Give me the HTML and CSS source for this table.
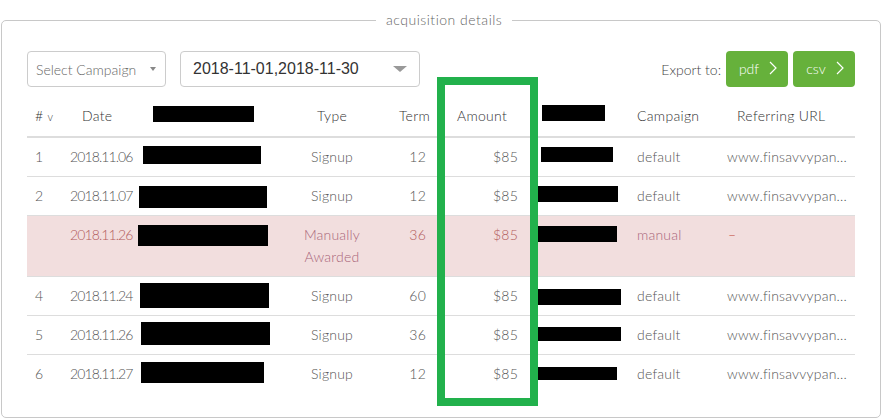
FILE: index.html
```html
<!DOCTYPE html>
<html>
<head>
<meta charset="utf-8">
<link rel="stylesheet" href="styles.css">
</head>
<body>
<fieldset class="panel">
  <legend class="panel-title">acquisition details</legend>
  <div class="toolbar">
    <div class="filters">
      <div class="select select-campaign">
        <span class="select-label">Select Campaign</span>
        <span class="caret-small"></span>
      </div>
      <div class="select select-date">
        <span class="date-label">2018-11-01,2018-11-30</span>
        <span class="caret-big"></span>
      </div>
    </div>
    <div class="export">
      <span class="export-label">Export to:</span>
      <button class="btn">pdf <svg class="chev" width="8" height="14" viewBox="0 0 8 14"><polyline points="1,1 7,7 1,13" fill="none" stroke="#fff" stroke-width="1.2"/></svg></button>
      <button class="btn">csv <svg class="chev" width="8" height="14" viewBox="0 0 8 14"><polyline points="1,1 7,7 1,13" fill="none" stroke="#fff" stroke-width="1.2"/></svg></button>
    </div>
  </div>
  <table class="grid">
    <colgroup>
      <col class="c-num"><col class="c-date"><col class="c-name"><col class="c-type"><col class="c-term"><col class="c-amt"><col class="c-ref"><col class="c-camp"><col class="c-url">
    </colgroup>
    <thead>
      <tr>
        <th class="num"># <span class="sort">v</span></th>
        <th class="date-h">Date</th>
        <th class="cell-r"><span class="redact rh1"></span></th>
        <th class="type">Type</th>
        <th class="term-h">Term</th>
        <th class="amt-h">Amount</th>
        <th class="cell-r"><span class="redact rh2"></span></th>
        <th class="camp">Campaign</th>
        <th class="url-h">Referring URL</th>
      </tr>
    </thead>
    <tbody>
      <tr>
        <td class="num">1</td><td class="date">2018.11.06</td>
        <td class="cell-r"><span class="redact a1"></span></td>
        <td class="type">Signup</td><td class="term">12</td><td class="amt">$85</td>
        <td class="cell-r"><span class="redact b1"></span></td>
        <td class="camp">default</td><td class="url">www.finsavvypan...</td>
      </tr>
      <tr>
        <td class="num">2</td><td class="date">2018.11.07</td>
        <td class="cell-r"><span class="redact a2"></span></td>
        <td class="type">Signup</td><td class="term">12</td><td class="amt">$85</td>
        <td class="cell-r"><span class="redact b2"></span></td>
        <td class="camp">default</td><td class="url">www.finsavvypan...</td>
      </tr>
      <tr class="manual">
        <td class="num"></td><td class="date">2018.11.26</td>
        <td class="cell-r"><span class="redact a3"></span></td>
        <td class="type">Manually<br>Awarded</td><td class="term">36</td><td class="amt">$85</td>
        <td class="cell-r"><span class="redact b3"></span></td>
        <td class="camp">manual</td><td class="url dash">–</td>
      </tr>
      <tr>
        <td class="num">4</td><td class="date">2018.11.24</td>
        <td class="cell-r"><span class="redact a4"></span></td>
        <td class="type">Signup</td><td class="term">60</td><td class="amt">$85</td>
        <td class="cell-r"><span class="redact b4"></span></td>
        <td class="camp">default</td><td class="url">www.finsavvypan...</td>
      </tr>
      <tr>
        <td class="num">5</td><td class="date">2018.11.26</td>
        <td class="cell-r"><span class="redact a5"></span></td>
        <td class="type">Signup</td><td class="term">36</td><td class="amt">$85</td>
        <td class="cell-r"><span class="redact b5"></span></td>
        <td class="camp">default</td><td class="url">www.finsavvypan...</td>
      </tr>
      <tr>
        <td class="num">6</td><td class="date">2018.11.27</td>
        <td class="cell-r"><span class="redact a6"></span></td>
        <td class="type">Signup</td><td class="term">12</td><td class="amt">$85</td>
        <td class="cell-r"><span class="redact b6"></span></td>
        <td class="camp">default</td><td class="url">www.finsavvypan...</td>
      </tr>
    </tbody>
  </table>
</fieldset>
<div class="highlight"></div>
</body>
</html>
```
FILE: styles.css
```css
html, body {
  margin: 0;
  padding: 0;
  background: #fff;
}
body {
  width: 884px;
  height: 419px;
  overflow: hidden;
  position: relative;
  font-family: Lato, "Open Sans", sans-serif;
  font-weight: 300;
  color: #555;
}
.panel {
  box-sizing: border-box;
  width: 880px;
  margin: 12px 3px 2px 1px;
  padding: 23px 25px 24px 25px;
  border: 1px solid #c8c8c8;
  border-radius: 5px;
  min-width: 0;
}
.panel-title {
  margin-left: 349px;
  padding: 0 10px;
  font-size: 14px;
  letter-spacing: 0.5px;
  line-height: 16px;
  color: #666;
}
.toolbar {
  display: flex;
  justify-content: space-between;
  align-items: center;
  height: 36px;
}
.filters {
  display: flex;
  gap: 14px;
}
.select {
  box-sizing: border-box;
  height: 36px;
  border: 1px solid #ccc;
  border-radius: 4px;
  display: flex;
  align-items: center;
  justify-content: space-between;
  background: #fff;
}
.select-campaign {
  width: 139px;
  padding: 0 9px 0 8px;
}
.select-label {
  font-size: 14px;
  color: #666;
}
.caret-small {
  width: 0;
  height: 0;
  border-left: 3px solid transparent;
  border-right: 3px solid transparent;
  border-top: 4px solid #888;
}
.select-date {
  width: 240px;
  padding: 0 12px 0 12px;
}
.date-label {
  font-family: "Liberation Sans", Arial, sans-serif;
  font-weight: normal;
  font-size: 16px;
  color: #333;
}
.caret-big {
  width: 0;
  height: 0;
  border-left: 7px solid transparent;
  border-right: 7px solid transparent;
  border-top: 6px solid #999;
}
.export {
  display: flex;
  align-items: center;
  gap: 5px;
}
.export-label {
  font-size: 14px;
  color: #444;
}
.btn {
  box-sizing: border-box;
  height: 36px;
  width: 62px;
  border: none;
  border-radius: 4px;
  background: #66b13b;
  color: #fff;
  font-family: Lato, "Open Sans", sans-serif;
  font-weight: 300;
  font-size: 14px;
  display: flex;
  align-items: center;
  justify-content: center;
  gap: 10px;
  padding: 0 0 2px 2px;
}
.chev {
  display: block;
}
.grid {
  margin-top: 10px;
  width: 828px;
  border-collapse: collapse;
  table-layout: fixed;
  font-size: 14px;
}
.c-num { width: 36px; }
.c-date { width: 74px; }
.c-name { width: 153px; }
.c-type { width: 84px; }
.c-term { width: 72px; }
.c-amt { width: 84px; }
.c-ref { width: 99px; }
.c-camp { width: 91px; }
.c-url { width: 135px; }
.grid th, .grid td {
  padding: 8px;
  line-height: 22px;
  text-align: left;
  vertical-align: top;
  white-space: nowrap;
  overflow: visible;
}
.grid th {
  font-weight: 300;
  color: #333;
  letter-spacing: 0.3px;
  border-bottom: 2px solid #ddd;
}
.grid td {
  border-top: 1px solid #ddd;
  color: #555;
  letter-spacing: 0.2px;
}
.grid tbody tr:first-child td {
  border-top: none;
}
.sort {
  font-size: 11px;
}
.grid .date-h { padding-left: 19px; }
.grid .type { text-align: center; }
.grid .term-h { text-align: right; padding-right: 16px; }
.grid .term { text-align: right; padding-right: 20px; }
.grid .amt-h { padding-left: 11px; }
.grid .amt { text-align: right; padding-right: 12px; }
.grid .url-h { padding-left: 17px; }
.grid .url { padding-left: 7px; }
.grid .date { padding-left: 7px; letter-spacing: -0.9px; }
.grid tr.manual td {
  background: #f2dede;
  color: #b35c5c;
}
.grid tr.manual .type,
.grid tr.manual .camp {
  color: #a9657a;
}
.grid tr.manual .dash {
  color: #c0392b;
  padding-left: 8px;
}
.cell-r {
  position: relative;
}
.redact {
  position: absolute;
  background: #000;
}
.rh1 { left: 16px; top: 9px; width: 101px; height: 16px; }
.rh2 { left: 12px; top: 8px; width: 63px; height: 16px; }
.a1 { left: 6px; top: 8px; width: 118px; height: 18px; }
.a2 { left: 2px; top: 9px; width: 128px; height: 22px; }
.a3 { left: 1px; top: 9px; width: 130px; height: 21px; }
.a4 { left: 3px; top: 6px; width: 129px; height: 25px; }
.a5 { left: 4px; top: 6px; width: 129px; height: 23px; }
.a6 { left: 4px; top: 7px; width: 123px; height: 21px; }
.b1 { left: 11px; top: 9px; width: 72px; height: 15px; }
.b2 { left: 5px; top: 9px; width: 83px; height: 16px; }
.b3 { left: 8px; top: 10px; width: 79px; height: 16px; }
.b4 { left: 5px; top: 12px; width: 86px; height: 16px; }
.b5 { left: 4px; top: 11px; width: 87px; height: 14px; }
.b6 { left: 6px; top: 12px; width: 81px; height: 13px; }
.highlight {
  position: absolute;
  left: 437px;
  top: 77px;
  width: 101px;
  height: 329px;
  box-sizing: border-box;
  border: 8px solid #22b14c;
}
```
